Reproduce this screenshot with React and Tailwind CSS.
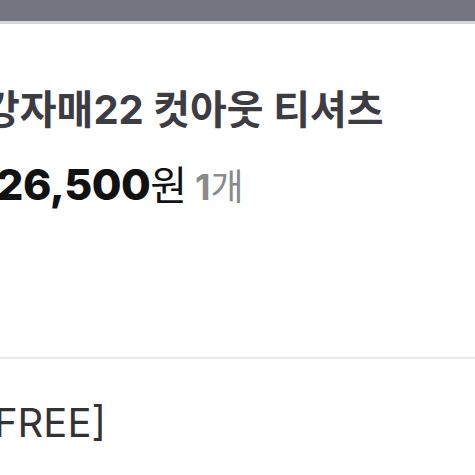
export default function App() {
  return (
    <div className="w-[475px] h-[475px] overflow-hidden bg-white font-['Inter','Noto_Sans_CJK_KR',sans-serif]">
      {/* top bar */}
      <div className="h-[21px] bg-[#737680]" />
      <div className="h-[3px] bg-[#d6d7da]" />

      <div className="pt-[64px]">
        <h1 className="-ml-[17px] whitespace-nowrap text-[40px] leading-[44px] font-bold text-[#3c3c42]">
          강자매22 컷아웃 티셔츠
        </h1>

        <div className="mt-[28px] -ml-[4px] flex items-baseline whitespace-nowrap text-[#111]">
          <span className="text-[43px] leading-[48px] font-extrabold tracking-[-0.5px]">26,500</span>
          <span className="text-[40px] leading-[48px] font-normal">원</span>
          <span className="ml-[8px] text-[36px] leading-[48px] font-bold text-[#8a8a8a]">1</span>
          <span className="text-[36px] leading-[48px] font-normal text-[#8a8a8a]">개</span>
        </div>
      </div>

      <div className="mt-[146px] h-[2px] bg-[#ebebeb]" />

      <div className="mt-[40px] -ml-[6px] whitespace-nowrap text-[40px] leading-[48px] font-normal text-[#333]">
        FREE]
      </div>
    </div>
  );
}
